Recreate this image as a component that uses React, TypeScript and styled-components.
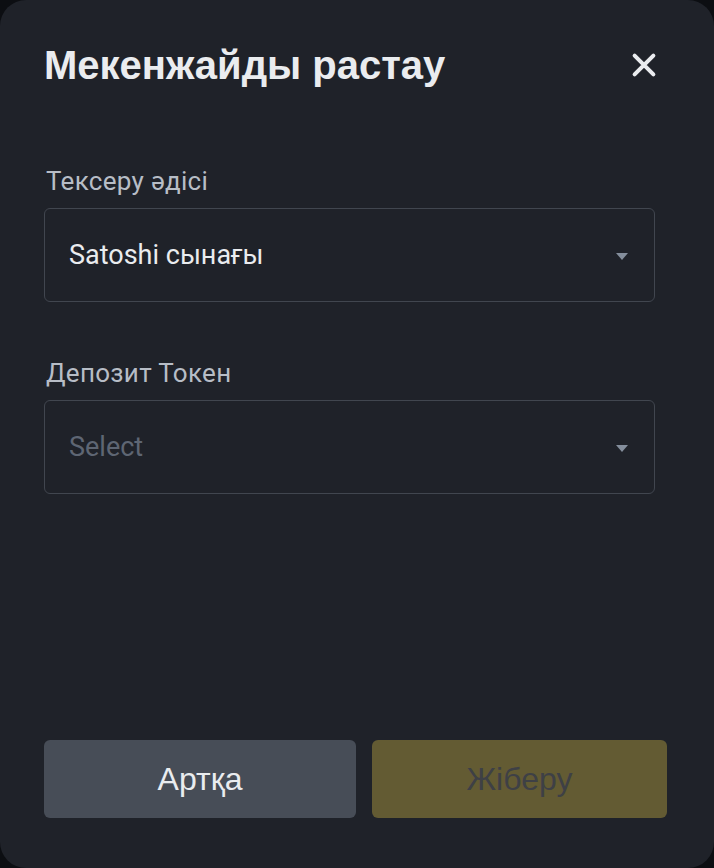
import React from "react";
import styled, { createGlobalStyle } from "styled-components";

const Global = createGlobalStyle`
  html, body { margin: 0; padding: 0; background: #0c0e12; }
  * { box-sizing: border-box; }
`;

const Modal = styled.div`
  width: 714px;
  height: 868px;
  background: #1f2229;
  border-radius: 26px;
  display: flex;
  flex-direction: column;
  padding: 43px 47px 50px 44px;
  font-family: Roboto, "Liberation Sans", sans-serif;
`;

const Header = styled.div`
  display: flex;
  align-items: center;
  justify-content: space-between;
  height: 44px;
  margin-bottom: 79px;
`;

const Title = styled.h1`
  margin: 0;
  font-family: "Liberation Sans", Arial, sans-serif;
  font-weight: 700;
  font-size: 40px;
  line-height: 44px;
  color: #eaecef;
`;

const Close = styled.button`
  background: none;
  border: none;
  padding: 0;
  width: 34px;
  height: 34px;
  display: flex;
  align-items: center;
  justify-content: center;
  cursor: pointer;
  margin-right: 6px;
`;

const Field = styled.div`
  display: flex;
  flex-direction: column;
  gap: 12px;
  margin-bottom: 56px;
`;

const Label = styled.label`
  font-size: 26px;
  letter-spacing: 0.3px;
  color: #b7bdc6;
  line-height: 30px;
  padding-left: 2px;
`;

const SelectBox = styled.div`
  height: 94px;
  width: 611px;
  border: 1.5px solid #41464f;
  border-radius: 6px;
  display: flex;
  align-items: center;
  justify-content: space-between;
  padding: 0 26px 0 24px;
`;

const Value = styled.span<{ $placeholder?: boolean }>`
  font-size: 27px;
  color: ${(p) => (p.$placeholder ? "#5e6673" : "#eaecef")};
`;

const Caret = styled.span`
  width: 0;
  height: 0;
  border-left: 6px solid transparent;
  border-right: 6px solid transparent;
  border-top: 7px solid #848e9c;
  margin-top: 2px;
`;

const Spacer = styled.div`
  flex: 1;
`;

const Buttons = styled.div`
  display: grid;
  grid-template-columns: 312px 295px;
  gap: 16px;
`;

const Button = styled.button<{ $primary?: boolean }>`
  height: 78px;
  border: none;
  border-radius: 6px;
  font-family: "Liberation Sans", Arial, sans-serif;
  font-size: 32px;
  background: ${(p) => (p.$primary ? "#635b33" : "#474d57")};
  color: ${(p) => (p.$primary ? "#3e4045" : "#eaecef")};
`;

export default function App() {
  return (
    <>
      <Global />
      <Modal>
        <Header>
          <Title>Мекенжайды растау</Title>
          <Close aria-label="close">
            <svg width="30" height="30" viewBox="0 0 24 24">
              <path d="M4.5 4.5 L19.5 19.5 M19.5 4.5 L4.5 19.5" stroke="#eaecef" strokeWidth="3.2" strokeLinecap="round" />
            </svg>
          </Close>
        </Header>
        <Field>
          <Label>Тексеру әдісі</Label>
          <SelectBox>
            <Value>Satoshi сынағы</Value>
            <Caret />
          </SelectBox>
        </Field>
        <Field>
          <Label>Депозит Токен</Label>
          <SelectBox>
            <Value $placeholder>Select</Value>
            <Caret />
          </SelectBox>
        </Field>
        <Spacer />
        <Buttons>
          <Button>Артқа</Button>
          <Button $primary>Жіберу</Button>
        </Buttons>
      </Modal>
    </>
  );
}
